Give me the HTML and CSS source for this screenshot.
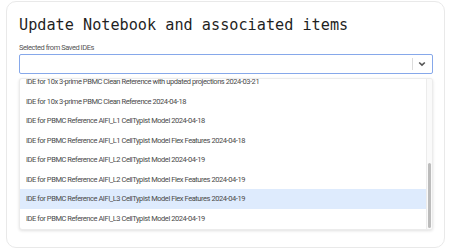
FILE: index.html
```
<!DOCTYPE html>
<html lang="en">
<head>
    <meta charset="UTF-8">
    <title>Update Notebook</title>
    <link rel="stylesheet" href="styles.css">
</head>
<body>
    <div class="card">
        <h1 class="title">Update Notebook and associated items</h1>
        <div class="field">
            <label class="label">Selected from Saved IDEs</label>
            <div class="select">
                <span class="value"></span>
                <span class="sep"></span>
                <svg class="chevron" width="8" height="6" viewBox="0 0 8 6">
                    <path d="M1.2 1.5 L4 4.2 L6.8 1.5" fill="none" stroke="#555" stroke-width="1.6"/>
                </svg>
            </div>
            <div class="menu">
                <div class="list">
                    <ul class="options">
                        <li>IDE for 10x 3-prime PBMC Reference 2024-02-27</li>
                        <li>IDE for 10x 3-prime PBMC Reference 2024-02-28</li>
                        <li>IDE for 10x 3-prime PBMC Reference with projections 2024-03-01</li>
                        <li>IDE for 10x 3-prime PBMC Reference with projections 2024-03-05</li>
                        <li>IDE for 10x 3-prime PBMC Clean Reference 2024-03-12</li>
                        <li>IDE for 10x 3-prime PBMC Clean Reference 2024-03-14</li>
                        <li>IDE for 10x 3-prime PBMC Clean Reference 2024-03-20</li>
                        <li>IDE for 10x 3-prime PBMC Clean Reference with updated projections 2024-03-21</li>
                        <li>IDE for 10x 3-prime PBMC Clean Reference 2024-04-18</li>
                        <li>IDE for PBMC Reference AIFI_L1 CellTypist Model 2024-04-18</li>
                        <li>IDE for PBMC Reference AIFI_L1 CellTypist Model Flex Features 2024-04-18</li>
                        <li>IDE for PBMC Reference AIFI_L2 CellTypist Model 2024-04-19</li>
                        <li>IDE for PBMC Reference AIFI_L2 CellTypist Model Flex Features 2024-04-19</li>
                        <li class="active">IDE for PBMC Reference AIFI_L3 CellTypist Model Flex Features 2024-04-19</li>
                        <li>IDE for PBMC Reference AIFI_L3 CellTypist Model 2024-04-19</li>
                    </ul>
                </div>
                <div class="scrollbar">
                    <div class="thumb"></div>
                </div>
            </div>
        </div>
    </div>
</body>
</html>
```

FILE: styles.css
```
body,ul,li,h1{margin:0;padding:0;}
li{list-style:none;}
body{
    background: #fff;
    padding: 1px 5px 0 6px;
    font-family: Roboto, "Liberation Sans", sans-serif;
}
.card{
    box-sizing: border-box;
    height: 247px;
    padding: 13px 12px 0 12px;
    border: 1px solid #e9e9e9;
    border-radius: 10px;
}
.title{
    font-family: "DejaVu Sans Mono", "Liberation Mono", monospace;
    font-size: 15.2px;
    font-weight: normal;
    line-height: 20px;
    color: #1f1f1f;
}
.field{
    margin-top: 7px;
    width: 414px;
}
.label{
    display: block;
    font-size: 7.5px;
    letter-spacing: -0.45px;
    line-height: 11px;
    color: #555;
}
.select{
    display: flex;
    align-items: center;
    box-sizing: border-box;
    height: 20px;
    margin-top: 1px;
    border: 1px solid #86a8ea;
    border-radius: 2px;
    background: #fff;
}
.select .value{
    flex: 1;
}
.select .sep{
    width: 1px;
    height: 12px;
    background: #dcdcdc;
}
.select .chevron{
    margin: 0 6px 0 5px;
}
.menu{
    display: flex;
    box-sizing: border-box;
    height: 152px;
    margin-top: 4px;
    overflow: hidden;
    border: 1px solid #ececec;
    border-radius: 3px;
    background: #fff;
    box-shadow: 0 1px 3px rgba(0,0,0,0.12);
}
.list{
    flex: 1;
    display: flex;
    flex-direction: column-reverse;
    overflow: hidden;
}
.options{
    padding-bottom: 1px;
}
.options li{
    height: 19.5px;
    line-height: 19.5px;
    padding-left: 6px;
    font-size: 7.5px;
    letter-spacing: -0.44px;
    color: #4a4a4a;
    white-space: nowrap;
}
.options li.active{
    background: #deebfd;
}
.scrollbar{
    display: flex;
    flex-direction: column;
    justify-content: flex-end;
    width: 6px;
    padding: 0 1px 1px 1px;
    box-sizing: border-box;
    background: #fafafa;
    border-left: 1px solid #ececec;
}
.scrollbar .thumb{
    height: 65px;
    border-radius: 2px;
    background: #bcbcbc;
}
```
